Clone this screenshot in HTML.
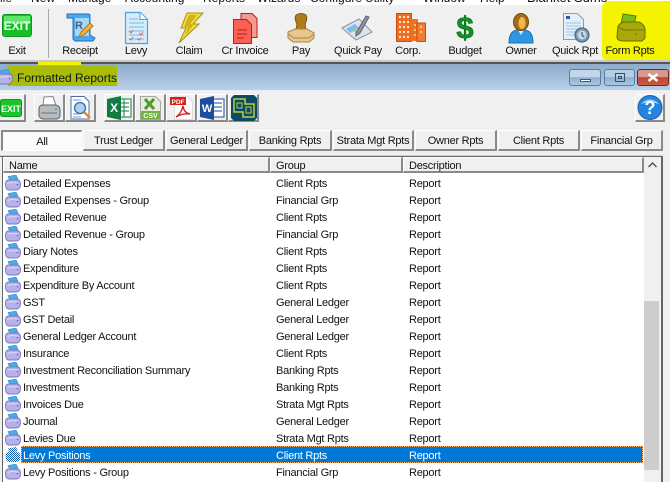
<!DOCTYPE html>
<html><head><meta charset="utf-8"><style>
html,body{margin:0;padding:0;width:670px;height:482px;overflow:hidden;background:#f0f0f0}
body{position:relative;font-family:"Liberation Sans",sans-serif;font-size:11px;letter-spacing:-.25px;color:#111}
.a{position:absolute}
.t{position:absolute;white-space:nowrap;line-height:14px;margin-top:1px}
.c{transform:translateX(-50%)}
.tb{position:absolute;top:94px;height:28px;box-sizing:border-box;background:#f0f0f0;border:1px solid #fff;border-right:2px solid #8a8a8a;border-bottom:2px solid #8a8a8a}
.tab{position:absolute;top:130px;height:21px;box-sizing:border-box;background:#f0f0f0;border:1px solid #fff;border-right:2px solid #8a8a8a;border-bottom:2px solid #8a8a8a;text-align:center;line-height:21px;white-space:nowrap}
.h{position:absolute;top:157px;height:16px;box-sizing:border-box;background:#f0f0f0;border:1px solid #fff;border-right:2px solid #8a8a8a;border-bottom:2px solid #8a8a8a;padding-left:5px;line-height:16px}
svg{position:absolute;overflow:visible}
.wb{position:absolute;top:69px;height:17px;box-sizing:border-box;border-radius:3px;border:1px solid #5d7b9c}
.m{font-size:12px;letter-spacing:0;top:-10px}
</style></head><body>
<svg width="0" height="0"><defs>
<symbol id="p" viewBox="0 0 16 16"><path d="M3 1.500l8-1.500 2 4-8 2z" fill="#49ace8" stroke="#3a8fd0" stroke-width=".6"/><path d="M.5 9Q.5 5 4 5h8q3.500 0 3.500 4.500 0 5-4 5.500H4Q.5 15 .5 9z" fill="#b4b2e8" stroke="#7a78ba" stroke-width=".9"/><path d="M2.500 8.500q5-2 11 0" fill="none" stroke="#dcdbf6"/><circle cx="12.500" cy="9.500" r=".9" fill="#6c6aa8"/></symbol>
<pattern id="d" width="2" height="2" patternUnits="userSpaceOnUse"><rect width="1" height="1" fill="#0b5cb0"/><rect x="1" y="1" width="1" height="1" fill="#0b5cb0"/></pattern>
</defs></svg>

<!-- menu -->
<div class="a" style="left:0;top:0;width:670px;height:5px;background:#fff;overflow:hidden">
<div class="t m" style="left:0;color:#222">ile</div>
<div class="t m" style="left:31px">New</div>
<div class="t m" style="left:68px">Manage</div>
<div class="t m" style="left:125px">Accounting</div>
<div class="t m" style="left:203px">Reports</div>
<div class="t m" style="left:257px">Wizards</div>
<div class="t m" style="left:310px">Configure</div>
<div class="t m" style="left:365px">Utility</div>
<div class="t m" style="left:423px">Window</div>
<div class="t m" style="left:480px">Help</div>
<div class="t m" style="left:527px;font-size:13px">Blanket Sums</div>
</div>

<!-- highlight form rpts -->
<div class="a" style="left:602px;top:1px;width:68px;height:59px;background:#f4f400;border-radius:7px 0 0 5px"></div>

<div class="a" style="left:48px;top:9px;width:1px;height:49px;background:#a8a8a8"></div>

<!-- main toolbar icons -->
<svg style="left:2px;top:14px" width="30" height="23" viewBox="0 0 30 23"><rect x=".5" y=".5" width="29" height="22" rx="2.500" fill="#16bf28" stroke="#0d9a1c"/><rect x="2" y="2" width="26" height="8" fill="#5fe46a"/><text x="15" y="16" font-family="Liberation Sans" font-weight="700" font-size="12" letter-spacing="0" fill="#eafff0" text-anchor="middle">EXIT</text></svg>
<svg style="left:65px;top:12px" width="32" height="31" viewBox="0 0 32 31"><path d="M2 2h22l1 1v20l5 3-2 3H10l-2-2V6H2z" fill="#49a9ee" stroke="#2470b8"/><path d="M10 6h14v18H10z" fill="#a5d8fa"/><text x="10" y="17" font-family="Liberation Sans" font-weight="700" font-size="11" fill="#4a5f80">R</text><path d="M14 25l2-5 9-9 3 3-9 9z" fill="#eeb33c" stroke="#b07a18"/></svg>
<svg style="left:125px;top:12px" width="23" height="32" viewBox="0 0 23 32"><path d="M.5.500h15l7 7v24H.5z" fill="#d5ecfb" stroke="#4ba2e0" stroke-width="1.200"/><path d="M15 .5v7h7" fill="#fff" stroke="#4ba2e0"/><path d="M4 7h9M4 11h15M4 15h15M4 19h15M4 23h15M4 27h15" stroke="#7fb6e2"/><path d="M4 19l2 2 2-3M14 21l2 2 2-3M4 27l2 1 2-3M12 27l2 1 2-2" stroke="#e0655f" fill="none"/></svg>
<svg style="left:178px;top:12px" width="26" height="31" viewBox="0 0 26 31"><path d="M9 1h16L15 12h6L1 31 8 16H3z" fill="#f1dc2f" stroke="#a59222"/><path d="M11 3h8l-7 9h4L7 24l3-9H6z" fill="#d2b21e"/></svg>
<svg style="left:233px;top:13px" width="25" height="31" viewBox="0 0 25 31"><path d="M8 .5h11l5 5v19H8z" fill="#f29a94" stroke="#c01c10"/><path d="M.5 6.500h13l5 5v19H.5z" fill="#fb5f55" stroke="#c01c10"/><path d="M4 17h10M4 21h10M4 25h7" stroke="#b91f15"/></svg>
<svg style="left:287px;top:13px" width="28" height="30" viewBox="0 0 28 30"><path d="M9 2q5-3 10 0 2 4-1 9l1 6H9l1-6q-3-5-1-9z" fill="#ad7d1b" stroke="#7a5510"/><path d="M1 19l7-3h12l7 4v5l-5 4H6l-5-4z" fill="#e7c78c" stroke="#a68545"/><path d="M1 21l6 4h15l5-4" fill="none" stroke="#a68545"/></svg>
<svg style="left:341px;top:13px" width="32" height="28" viewBox="0 0 32 28"><path d="M1 15L18 6l13 13-16 8z" fill="#dfe4ec" stroke="#8a93a4"/><path d="M5 16l9-5 4 4-9 5z" fill="#7cbcee"/><path d="M12 18l4-2-1 4z" fill="#ebbb3a"/><path d="M15 20L25 3l3 1-9 16-4 3z" fill="#8e94a2" stroke="#5d6370"/></svg>
<svg style="left:396px;top:13px" width="30" height="29" viewBox="0 0 30 29"><rect x=".5" y=".5" width="15" height="28" fill="#f06d24" stroke="#c54d12"/><rect x="15" y="6" width="7" height="22" fill="#ef6f2a"/><rect x="21" y="10" width="8.500" height="18.500" fill="#f27c36" stroke="#c54d12"/><path d="M3 4h2M7 4h2M11 4h2M3 9h2M7 9h2M11 9h2M3 14h2M7 14h2M11 14h2M3 19h2M7 19h2M11 19h2M3 24h2M7 24h2M11 24h2" stroke="#fde8cd" stroke-width="2"/><path d="M18 12h2M18 17h2M18 22h2M24 14h2M24 19h2" stroke="#f8d54a" stroke-width="2"/></svg>
<svg style="left:456px;top:12px" width="18" height="31" viewBox="0 0 18 31"><text x="9" y="26" font-family="Liberation Sans" font-weight="700" font-size="31" letter-spacing="0" fill="#0f9424" stroke="#05601a" stroke-width=".6" text-anchor="middle">$</text></svg>
<svg style="left:508px;top:13px" width="26" height="31" viewBox="0 0 26 31"><path d="M1 30q0-12 8-13h8q8 1 8 13z" fill="#2b97e2" stroke="#1a6fb3"/><path d="M10 17l3 5 3-5z" fill="#dfeffa"/><ellipse cx="13" cy="9" rx="7.500" ry="8.500" fill="#a56d13" stroke="#74490a"/><ellipse cx="14" cy="10" rx="3.500" ry="6" fill="#efb84e"/></svg>
<svg style="left:563px;top:13px" width="27" height="30" viewBox="0 0 27 30"><path d="M.5.500h14l6 6v20H.5z" fill="#e4eff9" stroke="#7e9fc0"/><rect x="3" y="3" width="4" height="3" fill="#2a55b0"/><path d="M3 10h15M3 13h15M3 16h12M3 19h10M3 22h10" stroke="#9cc3e6"/><circle cx="19" cy="22" r="7" fill="#7c9bb4" stroke="#4f6679" stroke-width="1.200"/><circle cx="19" cy="22" r="4.500" fill="#c4d7e5"/><path d="M19 19v3l2 2" stroke="#33495c" fill="none"/></svg>
<svg style="left:616px;top:13px" width="30" height="29" viewBox="0 0 30 29"><path d="M7 1l13 2-2 9-13-1z" fill="#7dbd1a" stroke="#5a7a00"/><path d="M2 13q3-4 7-4h14q5 2 6 7v9l-3 3H8q-7 0-7-4z" fill="#aaa808" stroke="#6c6a00"/><path d="M3 14q3 3 8 3h18" fill="none" stroke="#7a7800"/><circle cx="20" cy="21" r=".8" fill="#6c6a00"/></svg>

<div class="t c" style="left:17px;top:43px">Exit</div>
<div class="t c" style="left:80px;top:43px">Receipt</div>
<div class="t c" style="left:136px;top:43px">Levy</div>
<div class="t c" style="left:189px;top:43px">Claim</div>
<div class="t c" style="left:245px;top:43px">Cr Invoice</div>
<div class="t c" style="left:301px;top:43px">Pay</div>
<div class="t c" style="left:358px;top:43px">Quick Pay</div>
<div class="t c" style="left:408px;top:43px">Corp.</div>
<div class="t c" style="left:465px;top:43px">Budget</div>
<div class="t c" style="left:521px;top:43px">Owner</div>
<div class="t c" style="left:575px;top:43px">Quick Rpt</div>
<div class="t c" style="left:630px;top:43px">Form Rpts</div>

<!-- separator -->
<div class="a" style="left:0;top:60px;width:670px;height:2px;background:#c8c8c8"></div>
<div class="a" style="left:0;top:62px;width:670px;height:2px;background:#555"></div>

<!-- title -->
<div class="a" style="left:0;top:64px;width:670px;height:26px;background:linear-gradient(#8eabcb,#b8d0e8)"></div>
<div class="a" style="left:38px;top:62px;width:43px;height:3px;background:#f4f400"></div>
<div class="a" style="left:8px;top:66px;width:109px;height:20px;background:#a9bd08"></div>
<div class="a" style="left:0;top:90px;width:670px;height:1px;background:#e8eef4"></div>
<svg style="left:-3px;top:69px" width="16" height="16"><use href="#p" width="16" height="16"/></svg>
<div class="t" style="left:17px;top:70px;font-size:12px;letter-spacing:0;color:#0b1a10">Formatted Reports</div>
<div class="wb" style="left:569px;width:32px;background:linear-gradient(#c3d6ea 45%,#8fb0d2 50%,#a8c8e4)"><div class="a" style="left:10px;top:9px;width:11px;height:3px;background:#fff;border:1px solid #44586e;box-sizing:border-box"></div></div>
<div class="wb" style="left:604px;width:31px;background:linear-gradient(#b5cde5 45%,#8fb0d2 50%,#a8c8e4)"><div class="a" style="left:10px;top:3px;width:10px;height:9px;border:1px solid #3c4f63;box-sizing:border-box"><div style="margin:2px;height:3px;border:1px solid #3c4f63;box-sizing:border-box"></div></div></div>
<div class="wb" style="left:637px;width:32px;background:linear-gradient(#d5998e 45%,#bd4a32 50%,#c8593f);border-color:#6e2a20"><svg style="left:9px;top:3px" width="12" height="9"><path d="M1.500 1l9 7M10.500 1l-9 7" stroke="#fff" stroke-width="2.500"/></svg></div>

<!-- report toolbar -->
<div class="tb" style="left:-4px;width:30px"><svg style="left:3px;top:4px" width="22" height="18" viewBox="0 0 22 18"><rect x=".5" y=".5" width="21" height="17" rx="2" fill="#1bc42c" stroke="#0d9a1c"/><text x="11" y="13" font-family="Liberation Sans" font-weight="700" font-size="9" letter-spacing="0" fill="#eafff0" text-anchor="middle">EXIT</text></svg></div>
<div class="tb" style="left:34px;width:31px"><svg style="left:3px;top:1px" width="23" height="24" viewBox="0 0 23 24"><path d="M6 1l9-.500 3 9H5z" fill="#fff" stroke="#7c8792"/><path d="M1 13q0-4 4-4h13q4 1 4 5v5q0 3-3 4H5q-4-1-4-4z" fill="#b6bcc0" stroke="#5a6268"/><path d="M3 17h16" stroke="#6d757b"/><circle cx="18" cy="13" r="1" fill="#4fb34f"/></svg></div>
<div class="tb" style="left:65px;width:31px"><svg style="left:4px;top:1px" width="23" height="24" viewBox="0 0 23 24"><path d="M1 .5h13l5 5V23H1z" fill="#fff" stroke="#4a72a8"/><path d="M3 4h8M3 18h6M3 21h8M15 9v8" stroke="#7a9ccc"/><circle cx="10" cy="12" r="5.500" fill="#a7d2f0" stroke="#3c6aa2" stroke-width="1.300"/><path d="M14 16l6 6" stroke="#e58a25" stroke-width="2.500"/></svg></div>
<div class="tb" style="left:104px;width:31px"><svg style="left:2px;top:1px" width="25" height="24" viewBox="0 0 25 24"><rect x="10" y="3" width="14" height="18" fill="#fff" stroke="#107c41"/><path d="M12 7h10M12 11h10M12 15h10M17 3v18" stroke="#107c41"/><path d="M0 3l14-3v24L0 21z" fill="#107c41"/><text x="7" y="16" font-family="Liberation Sans" font-weight="700" font-size="12" fill="#fff" text-anchor="middle">X</text></svg></div>
<div class="tb" style="left:135px;width:31px"><svg style="left:4px;top:1px" width="21" height="24" viewBox="0 0 21 24"><path d="M.5.500h15l5 5v18H.5z" fill="#e9ebdf" stroke="#a4a89a"/><path d="M5 3l9 10M14 3L5 13" stroke="#4d9b2a" stroke-width="3"/><rect x="1" y="15" width="19" height="8" fill="#6fb243"/><text x="10.500" y="22" font-family="Liberation Sans" font-weight="700" font-size="7" letter-spacing="0" fill="#fff" text-anchor="middle">CSV</text></svg></div>
<div class="tb" style="left:166px;width:31px"><svg style="left:3px;top:1px" width="23" height="24" viewBox="0 0 23 24"><path d="M4.500 .5h13l5 5V23.500h-18z" fill="#fff" stroke="#dcdcdc"/><rect x="0" y="1" width="16" height="8" fill="#d3201a"/><text x="8" y="8" font-family="Liberation Sans" font-weight="700" font-size="6.500" letter-spacing="0" fill="#fff" text-anchor="middle">PDF</text><path d="M6 21q5-3 7-11 1 7 7 8-8-1-14 3z" fill="none" stroke="#d3201a" stroke-width="1.400"/></svg></div>
<div class="tb" style="left:197px;width:31px"><svg style="left:2px;top:1px" width="25" height="24" viewBox="0 0 25 24"><rect x="10" y="3" width="14" height="18" fill="#fff" stroke="#1c4d9c"/><path d="M14 7h8M14 11h8M14 15h8" stroke="#1c4d9c"/><path d="M0 3l14-3v24L0 21z" fill="#1c4d9c"/><text x="7" y="16" font-family="Liberation Sans" font-weight="700" font-size="11" fill="#fff" text-anchor="middle">W</text></svg></div>
<div class="tb" style="left:228px;width:31px"><svg style="left:2px;top:0" width="26" height="26" viewBox="0 0 26 26"><path d="M3 0h20l3 3v20l-3 3H3l-3-3V3z" fill="#0b4a63"/><path d="M3 4h11v5h9v13H12v-5H3z" fill="none" stroke="#bdcf47" stroke-width="1.500"/><path d="M6 8h5v5H6zM15 12h5v6h-5z" fill="none" stroke="#bdcf47"/></svg></div>
<div class="tb" style="left:635px;width:30px"><svg style="left:1px;top:0" width="26" height="25" viewBox="0 0 26 25"><circle cx="13" cy="12.500" r="12" fill="#2485e0" stroke="#1a5ea8"/><path d="M4 9q9-9 18 0-9-3-18 0z" fill="#9ed1f6"/><text x="13" y="19" font-family="Liberation Sans" font-weight="700" font-size="18" letter-spacing="0" fill="#fff" text-anchor="middle">?</text></svg></div>

<!-- tabs -->
<div class="tab" style="left:1px;width:81px;background:#fbfbfb;border:1px solid #fff;border-top:2px solid #8a8a8a;border-left:2px solid #8a8a8a;line-height:20px">All</div>
<div class="tab" style="left:83px;width:82px">Trust Ledger</div>
<div class="tab" style="left:166px;width:82px">General Ledger</div>
<div class="tab" style="left:249px;width:83px">Banking Rpts</div>
<div class="tab" style="left:333px;width:81px">Strata Mgt Rpts</div>
<div class="tab" style="left:415px;width:82px">Owner Rpts</div>
<div class="tab" style="left:498px;width:82px">Client Rpts</div>
<div class="tab" style="left:581px;width:82px">Financial Grp</div>

<!-- list -->
<div class="a" style="left:0;top:155px;width:662px;height:1px;background:#d0d0d0"></div>
<div class="a" style="left:0;top:156px;width:662px;height:1px;background:#666"></div>
<div class="a" style="left:2px;top:156px;width:1px;height:326px;background:#666"></div>
<div class="a" style="left:661px;top:156px;width:2px;height:326px;background:#666"></div>
<div class="a" style="left:3px;top:173px;width:641px;height:309px;background:#fff"></div>
<div class="a" style="left:644px;top:157px;width:16px;height:325px;background:#f0f0f0"></div>
<div class="a" style="left:644px;top:301px;width:15px;height:169px;background:#cdcdcd"></div>
<svg style="left:648px;top:162px" width="9" height="6"><path d="M.5 5L4.500 1l4 4" fill="none" stroke="#555" stroke-width="1.500"/></svg>
<div class="h" style="left:3px;width:267px">Name</div>
<div class="h" style="left:270px;width:133px">Group</div>
<div class="h" style="left:403px;width:241px">Description</div>

<div class="a" style="left:21px;top:446px;width:622px;height:17px;background:#0078d7;box-sizing:border-box;border:1px dotted #ffb060"></div>

<svg style="left:5px;top:175px" width="16" height="16"><use href="#p" width="16" height="16"/></svg>
<svg style="left:5px;top:192px" width="16" height="16"><use href="#p" width="16" height="16"/></svg>
<svg style="left:5px;top:209px" width="16" height="16"><use href="#p" width="16" height="16"/></svg>
<svg style="left:5px;top:226px" width="16" height="16"><use href="#p" width="16" height="16"/></svg>
<svg style="left:5px;top:243px" width="16" height="16"><use href="#p" width="16" height="16"/></svg>
<svg style="left:5px;top:260px" width="16" height="16"><use href="#p" width="16" height="16"/></svg>
<svg style="left:5px;top:277px" width="16" height="16"><use href="#p" width="16" height="16"/></svg>
<svg style="left:5px;top:294px" width="16" height="16"><use href="#p" width="16" height="16"/></svg>
<svg style="left:5px;top:311px" width="16" height="16"><use href="#p" width="16" height="16"/></svg>
<svg style="left:5px;top:328px" width="16" height="16"><use href="#p" width="16" height="16"/></svg>
<svg style="left:5px;top:345px" width="16" height="16"><use href="#p" width="16" height="16"/></svg>
<svg style="left:5px;top:362px" width="16" height="16"><use href="#p" width="16" height="16"/></svg>
<svg style="left:5px;top:379px" width="16" height="16"><use href="#p" width="16" height="16"/></svg>
<svg style="left:5px;top:396px" width="16" height="16"><use href="#p" width="16" height="16"/></svg>
<svg style="left:5px;top:413px" width="16" height="16"><use href="#p" width="16" height="16"/></svg>
<svg style="left:5px;top:430px" width="16" height="16"><use href="#p" width="16" height="16"/></svg>
<svg style="left:5px;top:447px" width="16" height="16"><path d="M3 1.500l8-1.500 2 4-8 2z" fill="url(#d)"/><path d="M.5 9Q.5 5 4 5h8q3.500 0 3.500 4.500 0 5-4 5.500H4Q.5 15 .5 9z" fill="url(#d)"/></svg>
<svg style="left:5px;top:464px" width="16" height="16"><use href="#p" width="16" height="16"/></svg>

<div class="t" style="left:23px;top:176px">Detailed Expenses</div><div class="t" style="left:276px;top:176px">Client Rpts</div><div class="t" style="left:409px;top:176px">Report</div>
<div class="t" style="left:23px;top:193px">Detailed Expenses - Group</div><div class="t" style="left:276px;top:193px">Financial Grp</div><div class="t" style="left:409px;top:193px">Report</div>
<div class="t" style="left:23px;top:210px">Detailed Revenue</div><div class="t" style="left:276px;top:210px">Client Rpts</div><div class="t" style="left:409px;top:210px">Report</div>
<div class="t" style="left:23px;top:227px">Detailed Revenue - Group</div><div class="t" style="left:276px;top:227px">Financial Grp</div><div class="t" style="left:409px;top:227px">Report</div>
<div class="t" style="left:23px;top:244px">Diary Notes</div><div class="t" style="left:276px;top:244px">Client Rpts</div><div class="t" style="left:409px;top:244px">Report</div>
<div class="t" style="left:23px;top:261px">Expenditure</div><div class="t" style="left:276px;top:261px">Client Rpts</div><div class="t" style="left:409px;top:261px">Report</div>
<div class="t" style="left:23px;top:278px">Expenditure By Account</div><div class="t" style="left:276px;top:278px">Client Rpts</div><div class="t" style="left:409px;top:278px">Report</div>
<div class="t" style="left:23px;top:295px">GST</div><div class="t" style="left:276px;top:295px">General Ledger</div><div class="t" style="left:409px;top:295px">Report</div>
<div class="t" style="left:23px;top:312px">GST Detail</div><div class="t" style="left:276px;top:312px">General Ledger</div><div class="t" style="left:409px;top:312px">Report</div>
<div class="t" style="left:23px;top:329px">General Ledger Account</div><div class="t" style="left:276px;top:329px">General Ledger</div><div class="t" style="left:409px;top:329px">Report</div>
<div class="t" style="left:23px;top:346px">Insurance</div><div class="t" style="left:276px;top:346px">Client Rpts</div><div class="t" style="left:409px;top:346px">Report</div>
<div class="t" style="left:23px;top:363px">Investment Reconciliation Summary</div><div class="t" style="left:276px;top:363px">Banking Rpts</div><div class="t" style="left:409px;top:363px">Report</div>
<div class="t" style="left:23px;top:380px">Investments</div><div class="t" style="left:276px;top:380px">Banking Rpts</div><div class="t" style="left:409px;top:380px">Report</div>
<div class="t" style="left:23px;top:397px">Invoices Due</div><div class="t" style="left:276px;top:397px">Strata Mgt Rpts</div><div class="t" style="left:409px;top:397px">Report</div>
<div class="t" style="left:23px;top:414px">Journal</div><div class="t" style="left:276px;top:414px">General Ledger</div><div class="t" style="left:409px;top:414px">Report</div>
<div class="t" style="left:23px;top:431px">Levies Due</div><div class="t" style="left:276px;top:431px">Strata Mgt Rpts</div><div class="t" style="left:409px;top:431px">Report</div>
<div class="t" style="left:23px;top:448px;color:#fff">Levy Positions</div><div class="t" style="left:276px;top:448px;color:#fff">Client Rpts</div><div class="t" style="left:409px;top:448px;color:#fff">Report</div>
<div class="t" style="left:23px;top:465px">Levy Positions - Group</div><div class="t" style="left:276px;top:465px">Financial Grp</div><div class="t" style="left:409px;top:465px">Report</div>
</body></html>
